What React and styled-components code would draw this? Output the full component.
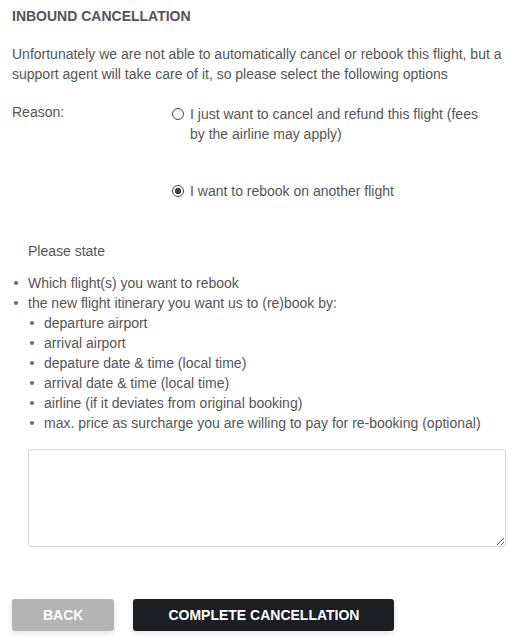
import styled, { createGlobalStyle } from "styled-components";

const GlobalStyle = createGlobalStyle`
  body {
    margin: 0;
    background: #fff;
    font-family: "Liberation Sans", Arial, sans-serif;
    color: #555;
  }
`;

const options = [
  { id: "refund", label: "I just want to cancel and refund this flight (fees by the airline may apply)", checked: false },
  { id: "rebook", label: "I want to rebook on another flight", checked: true },
];

const details = [
  "departure airport",
  "arrival airport",
  "depature date & time (local time)",
  "arrival date & time (local time)",
  "airline (if it deviates from original booking)",
  "max. price as surcharge you are willing to pay for re-booking (optional)",
];

const App = () => {
  return (
    <Page>
      <GlobalStyle />
      <Title>INBOUND CANCELLATION</Title>
      <Intro>
        Unfortunately we are not able to automatically cancel or rebook this flight, but a
        support agent will take care of it, so please select the following options
      </Intro>

      <ReasonRow>
        <Label>Reason:</Label>
        <OptionList>
          {options.map((o) => (
            <Option key={o.id}>
              <Radio checked={o.checked} />
              <span>{o.label}</span>
            </Option>
          ))}
        </OptionList>
      </ReasonRow>

      <StateBox>
        <Hint>Please state</Hint>
        <BulletList>
          <li>Which flight(s) you want to rebook</li>
          <li>the new flight itinerary you want us to (re)book by:</li>
        </BulletList>
        <SubList>
          {details.map((d) => (
            <li key={d}>{d}</li>
          ))}
        </SubList>
        <TextArea />
      </StateBox>

      <Buttons>
        <Button variant="grey">BACK</Button>
        <Button variant="dark">COMPLETE CANCELLATION</Button>
      </Buttons>
    </Page>
  );
};
export default App;

const Page = styled.div`
  width: 506px;
  padding: 6px 12px 12px;
  font-size: 14px;
  line-height: 20px;
`;

const Title = styled.h2`
  margin: 0;
  font-size: 14px;
  line-height: 20px;
  font-weight: 700;
  color: #555;
`;

const Intro = styled.p`
  margin: 18px 0 0;
`;

const ReasonRow = styled.div`
  display: grid;
  grid-template-columns: 160px 320px;
  margin-top: 18px;
`;

const Label = styled.div``;

const OptionList = styled.div`
  display: flex;
  flex-direction: column;
  gap: 37px;
  padding-top: 2px;
`;

const Option = styled.label`
  display: flex;
  align-items: flex-start;
  gap: 6px;
`;

const Radio = styled.span`
  flex: none;
  width: 12px;
  height: 12px;
  margin-top: 4px;
  box-sizing: border-box;
  border: 1.5px solid #444;
  border-radius: 50%;
  background: ${(p) => (p.checked ? "radial-gradient(circle, #444 0 3px, #fff 3.5px)" : "#fff")};
`;

const StateBox = styled.div`
  padding-left: 16px;
  margin-top: 40px;
`;

const Hint = styled.div`
  margin-bottom: 12px;
`;

const BulletList = styled.ul`
  margin: 0 0 0 -16px;
  padding-left: 16px;
  list-style: none;

  li {
    position: relative;
  }
  li::before {
    content: "";
    position: absolute;
    left: -14px;
    top: 8px;
    width: 4px;
    height: 4px;
    border-radius: 50%;
    background: #666;
  }
`;

const SubList = styled(BulletList)`
  margin: 0;
`;

const TextArea = styled.textarea`
  display: block;
  width: 478px;
  height: 98px;
  box-sizing: border-box;
  margin-top: 16px;
  border: 1px solid #d6d6d6;
  border-radius: 3px;
  font-family: inherit;
  font-size: 14px;
  outline: none;
`;

const Buttons = styled.div`
  display: flex;
  gap: 19px;
  margin-top: 52px;
`;

const Button = styled.button`
  height: 32px;
  padding: 0 31px;
  border: none;
  border-radius: 3px;
  font-family: "Liberation Sans", Arial, sans-serif;
  font-size: 14px;
  font-weight: 700;
  color: #fff;
  background: ${(p) => (p.variant === "dark" ? "#1b1f24" : "#b4b4b5")};
  box-shadow: 0 2px 6px rgba(0, 0, 0, 0.12);
  min-width: ${(p) => (p.variant === "dark" ? "261px" : "102px")};
`;
